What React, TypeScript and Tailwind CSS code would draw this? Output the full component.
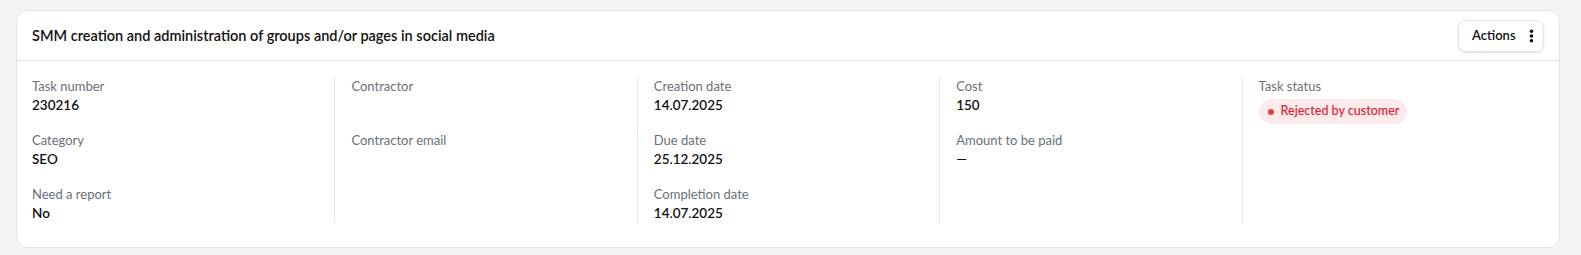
import React from 'react';

type Field = { label: string; value?: React.ReactNode };

const columns: Field[][] = [
  [
    { label: 'Task number', value: '230216' },
    { label: 'Category', value: 'SEO' },
    { label: 'Need a report', value: 'No' },
  ],
  [{ label: 'Contractor' }, { label: 'Contractor email' }],
  [
    { label: 'Creation date', value: '14.07.2025' },
    { label: 'Due date', value: '25.12.2025' },
    { label: 'Completion date', value: '14.07.2025' },
  ],
  [
    { label: 'Cost', value: '150' },
    { label: 'Amount to be paid', value: '—' },
  ],
];

function FieldItem({ label, value }: Field) {
  return (
    <div className="h-[38px]">
      <div className="text-[13px] leading-[18px] text-[#6b6f76]">{label}</div>
      <div className="text-[13.5px] leading-[20px] font-semibold text-[#111]">{value}</div>
    </div>
  );
}

function DotsIcon() {
  return (
    <svg width="5" height="14" viewBox="0 0 5 14" className="fill-current">
      <circle cx="2.5" cy="2.3" r="1.8" />
      <circle cx="2.5" cy="7" r="1.8" />
      <circle cx="2.5" cy="11.7" r="1.8" />
    </svg>
  );
}

export default function App() {
  return (
    <div
      className="min-h-screen bg-[#f4f4f4] pl-4 pr-[21px] pt-[10px]"
      style={{ fontFamily: 'Lato, "Noto Sans", sans-serif' }}
    >
      <div className="bg-white border border-[#e4e4e4] rounded-xl">
        <div className="h-[50px] flex items-center justify-between pl-[15px] pr-[15px] border-b border-[#e6e6e6]">
          <h1 className="text-[14.5px] font-semibold text-[#111]">
            SMM creation and administration of groups and/or pages in social media
          </h1>
          <button className="h-[32px] w-[86px] flex items-center pl-[13px] gap-[13px] border border-[#e2e2e2] rounded-lg text-[13px] font-semibold text-[#111] shadow-sm">
            Actions
            <DotsIcon />
          </button>
        </div>

        <div className="grid grid-cols-5 px-[15px] pt-4 pb-6">
          {columns.map((col, i) => (
            <div
              key={i}
              className={`flex flex-col gap-4 h-[146px] ${i > 0 ? 'border-l border-[#e6e6e6] pl-4' : ''}`}
            >
              {col.map((f) => (
                <FieldItem key={f.label} {...f} />
              ))}
            </div>
          ))}
          <div className="border-l border-[#e6e6e6] pl-4 h-[146px]">
            <div className="text-[13px] leading-[18px] text-[#6b6f76]">Task status</div>
            <div className="mt-1 inline-flex items-center gap-[7px] h-[25px] pl-[9px] pr-[8px] rounded-full bg-[#fdeaea] text-[12.5px] font-medium text-[#e0202e]">
              <span className="w-[6px] h-[6px] rounded-full bg-[#ef3b3b]" />
              Rejected by customer
            </div>
          </div>
        </div>
      </div>
    </div>
  );
}
